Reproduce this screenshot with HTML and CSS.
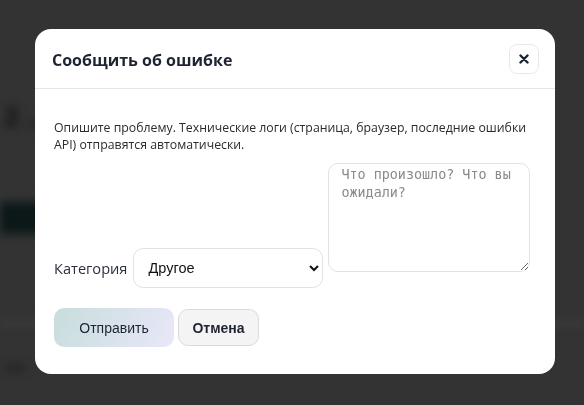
FILE: index.html
```html
<!DOCTYPE html>
<html lang="ru">
<head>
  <meta charset="UTF-8" />
  <title>Сообщить об ошибке</title>
  <link rel="stylesheet" href="styles.css">
</head>
<body>
  <!-- page behind the dialog, dimmed and blurred -->
  <div class="page">
    <div class="page-title">2 ...</div>
    <div class="page-bar"></div>
    <div class="page-line"></div>
    <div class="page-text"></div>
  </div>

  <div class="overlay">
    <div class="modal">
      <div class="modal-header">
        <h3>Сообщить об ошибке</h3>
        <button class="close-btn" aria-label="Закрыть">
          <svg width="10" height="10" viewBox="0 0 10 10">
            <path d="M1.5 1.5L8.5 8.5M8.5 1.5L1.5 8.5" stroke="#1f2433" stroke-width="2.4" stroke-linecap="round"/>
          </svg>
        </button>
      </div>

      <div class="modal-body">
        <p class="hint">Опишите проблему. Технические логи (страница, браузер, последние ошибки API) отправятся автоматически.</p>

        <div class="form-row">
          <label class="field">
            <span>Категория</span>
            <select>
              <option>Другое</option>
            </select>
          </label>
          <textarea placeholder="Что произошло? Что вы ожидали?"></textarea>
        </div>

        <div class="actions">
          <button class="send-btn">Отправить</button>
          <button class="cancel-btn">Отмена</button>
        </div>
      </div>
    </div>
  </div>
</body>
</html>
```

FILE: styles.css
```css
html, body {
  margin: 0;
  height: 100%;
}

body {
  background-color: #333;
  font-family: 'Open Sans', 'Noto Sans', sans-serif;
  overflow: hidden;
}

.page {
  filter: blur(5px);
  padding-top: 98px;
}

.page-title {
  font: bold 26px 'Open Sans', sans-serif;
  color: #111;
  padding-left: 4px;
}

.page-bar {
  width: 220px;
  margin-top: 68px;
  height: 32px;
  background-color: #0c1818;
}

.page-line {
  margin-top: 88px;
  height: 3px;
  background-color: #444;
}

.page-text {
  margin: 40px 0 0 4px;
  width: 22px;
  height: 6px;
  background-color: #222;
}

.overlay {
  position: fixed;
  inset: 0;
  padding: 29px 0 0 35px;
}

.modal {
  width: 520px;
  height: 345px;
  background-color: #fff;
  border-radius: 16px;
  overflow: hidden;
}

.modal-header {
  height: 59px;
  display: flex;
  align-items: center;
  justify-content: space-between;
  padding: 0 17px;
  border-bottom: 1px solid #e6e6e6;
}

.modal-header h3 {
  margin: 2px 0 0;
  font-size: 16px;
  font-weight: 700;
  color: #1f2433;
}

.close-btn {
  width: 30px;
  height: 30px;
  display: flex;
  align-items: center;
  justify-content: center;
  padding: 0;
  background-color: #fff;
  border: 1px solid #e8e8e8;
  border-radius: 8px;
  margin-right: -1px;
}

.modal-body {
  padding: 30px 19px 0;
}

.hint {
  margin: 0;
  font-size: 12.3px;
  line-height: 17px;
  color: #2b2b2b;
}

.form-row {
  display: flex;
  align-items: flex-end;
  gap: 5px;
  margin-top: 10px;
}

.field {
  display: flex;
  align-items: center;
  gap: 6px;
  font-size: 14.6px;
  color: #2b3040;
}

.field select {
  width: 190px;
  height: 40px;
  padding: 0 8px 0 10px;
  font: 14.5px 'Liberation Sans', Arial, sans-serif;
  color: #111;
  background-color: #fff;
  border: 1px solid #e2e2e2;
  border-radius: 10px;
}

textarea {
  width: 202px;
  height: 109px;
  box-sizing: border-box;
  margin-bottom: 16px;
  padding: 2px 12px;
  font: 13.4px/18px 'DejaVu Sans Mono', monospace;
  border: 1px solid #e2e2e2;
  border-radius: 10px;
}

textarea::placeholder {
  color: #8a8a8a;
}

.actions {
  display: flex;
  align-items: center;
  gap: 4px;
  margin-top: 20px;
}

.send-btn, .cancel-btn {
  font-family: 'Liberation Sans', Arial, sans-serif;
  font-size: 14px;
  border-radius: 10px;
  cursor: pointer;
}

.send-btn {
  width: 120px;
  height: 39px;
  border: none;
  background: linear-gradient(120deg, #c7dddb, #e9e7fa);
  color: #1f2433;
}

.cancel-btn {
  width: 81px;
  height: 37px;
  border: 1px solid #dadada;
  background-color: #f4f4f4;
  color: #1f2433;
  font-weight: bold;
}
```
